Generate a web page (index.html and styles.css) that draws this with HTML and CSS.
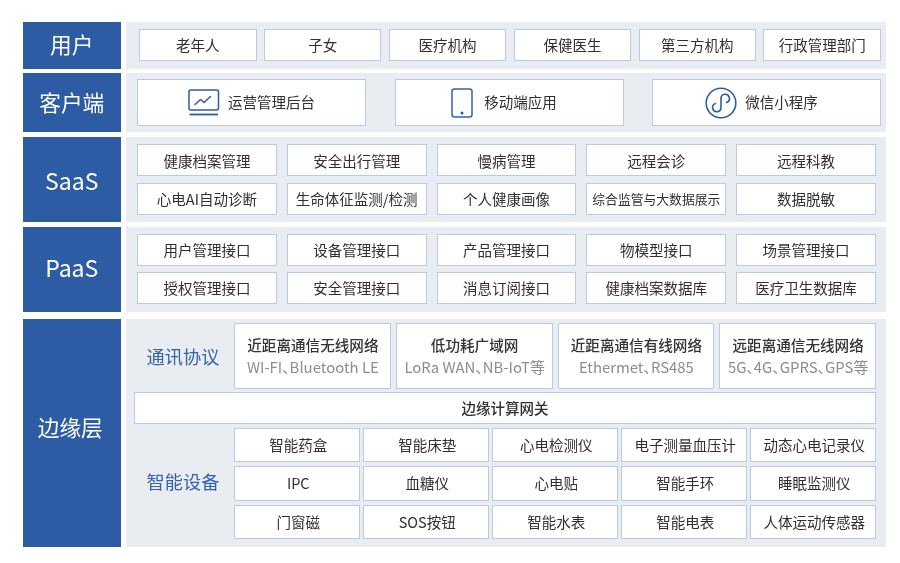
FILE: index.html
```html
<!DOCTYPE html>
<html lang="zh-CN">
<head>
<meta charset="utf-8">
<title>架构图</title>
<link rel="stylesheet" href="styles.css">
</head>
<body>
<main class="diagram">
  <section class="layer layer-user">
    <h2 class="title">用户</h2>
    <div class="panel grid-six">
      <div class="cell">老年人</div><div class="cell">子女</div><div class="cell">医疗机构</div><div class="cell">保健医生</div><div class="cell">第三方机构</div><div class="cell">行政管理部门</div>
    </div>
  </section>
  <section class="layer layer-client">
    <h2 class="title">客户端</h2>
    <div class="panel grid-three">
      <div class="cell app">
        <svg class="icon icon-monitor" viewBox="0 0 32 27" fill="none" stroke="#2d5ba4" stroke-width="1.5"><rect x="1" y="1" width="29.500" height="20" rx="2"/><path d="M7 15.500l5.500-5 3.500 3 6.500-6" stroke-linecap="round" stroke-linejoin="round"/><path d="M1.500 25.500h28.500" stroke-width="1.800"/></svg>
        <span>运营管理后台</span>
      </div>
      <div class="cell app app-shift">
        <svg class="icon icon-phone" viewBox="0 0 22 30" fill="none" stroke="#3562ab" stroke-width="1.500"><rect x="1" y="1" width="20" height="28" rx="2.500"/><circle cx="11" cy="25" r="1.500" fill="#2d5ba4" stroke="none"/></svg>
        <span>移动端应用</span>
      </div>
      <div class="cell app app-shift">
        <svg class="icon icon-mini" viewBox="0 0 32 32" fill="none" stroke="#2d5ba4" stroke-width="1.600"><circle cx="16" cy="16" r="14.800"/><path d="M10.500 16.500A4.200 4.200 0 1 0 16 20.500V11.500A4.200 4.200 0 1 1 21.500 15.500" stroke-linecap="round"/></svg>
        <span>微信小程序</span>
      </div>
    </div>
  </section>
  <section class="layer layer-saas">
    <h2 class="title title-latin">SaaS</h2>
    <div class="panel grid-five">
      <div class="cell">健康档案管理</div><div class="cell">安全出行管理</div><div class="cell">慢病管理</div><div class="cell">远程会诊</div><div class="cell">远程科教</div>
      <div class="cell">心电AI自动诊断</div><div class="cell">生命体征监测/检测</div><div class="cell">个人健康画像</div><div class="cell cell-small">综合监管与大数据展示</div><div class="cell">数据脱敏</div>
    </div>
  </section>
  <section class="layer layer-paas">
    <h2 class="title title-latin">PaaS</h2>
    <div class="panel grid-five">
      <div class="cell">用户管理接口</div><div class="cell">设备管理接口</div><div class="cell">产品管理接口</div><div class="cell">物模型接口</div><div class="cell">场景管理接口</div>
      <div class="cell">授权管理接口</div><div class="cell">安全管理接口</div><div class="cell">消息订阅接口</div><div class="cell">健康档案数据库</div><div class="cell">医疗卫生数据库</div>
    </div>
  </section>
  <section class="layer layer-edge">
    <h2 class="title">边缘层</h2>
    <div class="panel edge">
      <div class="edge-row protocols">
        <h3 class="label">通讯协议</h3>
        <div class="grid-protocols">
          <div class="cell proto"><strong>近距离通信无线网络</strong><span>WI-FI、Bluetooth LE</span></div>
          <div class="cell proto"><strong>低功耗广域网</strong><span>LoRa WAN、NB-IoT等</span></div>
          <div class="cell proto"><strong>近距离通信有线网络</strong><span>Ethermet、RS485</span></div>
          <div class="cell proto"><strong>远距离通信无线网络</strong><span>5G、4G、GPRS、GPS等</span></div>
        </div>
      </div>
      <div class="cell gateway">边缘计算网关</div>
      <div class="edge-row devices">
        <h3 class="label">智能设备</h3>
        <div class="grid-devices">
          <div class="cell">智能药盒</div><div class="cell">智能床垫</div><div class="cell">心电检测仪</div><div class="cell">电子测量血压计</div><div class="cell">动态心电记录仪</div>
          <div class="cell">IPC</div><div class="cell">血糖仪</div><div class="cell">心电贴</div><div class="cell">智能手环</div><div class="cell">睡眠监测仪</div>
          <div class="cell">门窗磁</div><div class="cell">SOS按钮</div><div class="cell">智能水表</div><div class="cell">智能电表</div><div class="cell">人体运动传感器</div>
        </div>
      </div>
    </div>
  </section>
</main>
</body>
</html>
```
FILE: styles.css
```css
* { box-sizing: border-box; margin: 0; padding: 0; }
html, body { width: 900px; height: 563px; background: #fff; overflow: hidden; }
body {
  font-family: "Noto Sans CJK SC", "Noto Sans", sans-serif;
  color: #303030;
  font-size: 14.5px;
}
.diagram {
  padding: 21.5px 14px 0 22.5px;
  display: flex;
  flex-direction: column;
  filter: blur(0.35px);
}
.layer { display: grid; grid-template-columns: 98.5px minmax(0, 1fr); column-gap: 5px; }
.layer-user { height: 47.5px; }
.layer-client { height: 59px; margin-top: 4px; }
.layer-saas { height: 85px; margin-top: 5px; }
.layer-paas { height: 85px; margin-top: 5px; }
.layer-edge { height: 228px; margin-top: 6.5px; }
.title {
  background: #2d5ba4;
  color: #fff;
  font-size: 21.7px;
  font-weight: 400;
  display: flex;
  align-items: center;
  justify-content: center;
  padding-bottom: 3px;
}
.title-latin { font-size: 23px; }
.layer-saas .title { padding-bottom: 0; padding-top: 1px; }
.layer-paas .title { padding-bottom: 6px; }
.layer-edge .title { padding-bottom: 12px; padding-right: 3px; }
.panel { background: #e9edf2; }
.cell {
  background: #fff;
  border: 1.5px solid #bcc8e6;
  display: flex;
  align-items: center;
  justify-content: center;
  white-space: nowrap;
  line-height: 1;
  min-width: 0;
}
.cell-small { font-size: 12.8px; }
.grid-six {
  display: grid;
  grid-template-columns: repeat(6, minmax(0, 1fr));
  column-gap: 7.3px;
  padding: 7.5px 5px 8px 13px;
}
.grid-three {
  display: grid;
  grid-template-columns: repeat(3, minmax(0, 1fr));
  column-gap: 28.5px;
  padding: 6px 5px 6px 11px;
}
.app { gap: 8px; }
.app-shift { padding-right: 10px; }
.icon { display: block; flex: none; }
.icon-monitor { width: 32px; height: 27px; }
.icon-phone { width: 22px; height: 30px; margin-right: 3px; }
.icon-mini { width: 32px; height: 32px; }
.grid-five {
  display: grid;
  grid-template-columns: repeat(5, minmax(0, 1fr));
  grid-template-rows: 32px 32px;
  column-gap: 10px;
  row-gap: 7px;
  padding: 7px 10px 7px 11px;
}
.layer-paas .grid-five { row-gap: 6px; }
.layer-saas .cell:nth-child(-n+5) { padding-top: 2px; }
.edge {
  display: flex;
  flex-direction: column;
  padding: 4.5px 10px 7.5px 8px;
}
.edge-row { display: grid; grid-template-columns: 100px minmax(0, 1fr); }
.protocols { height: 65.5px; }
.devices { height: 111.5px; margin-top: 4px; }
.gateway { height: 31.5px; margin-top: 3.5px; font-weight: 500; }
.label {
  color: #3562ab;
  font-size: 18.2px;
  font-weight: 400;
  display: flex;
  align-items: center;
  justify-content: center;
  padding-right: 2px;
}
.devices .label { padding-bottom: 5px; }
.grid-protocols {
  display: grid;
  grid-template-columns: repeat(4, minmax(0, 1fr));
  column-gap: 5px;
}
.proto { flex-direction: column; gap: 8px; padding: 1px 0 0 1px; }
.proto strong { font-weight: 500; font-size: 14.6px; color: #333; }
.proto span { color: #8a8d91; font-size: 14.9px; font-feature-settings: "palt"; }
.grid-devices {
  display: grid;
  grid-template-columns: repeat(5, minmax(0, 1fr));
  grid-template-rows: repeat(3, minmax(0, 1fr));
  column-gap: 3px;
  row-gap: 4px;
}
.grid-devices .cell { padding-left: 2.5px; }
```
